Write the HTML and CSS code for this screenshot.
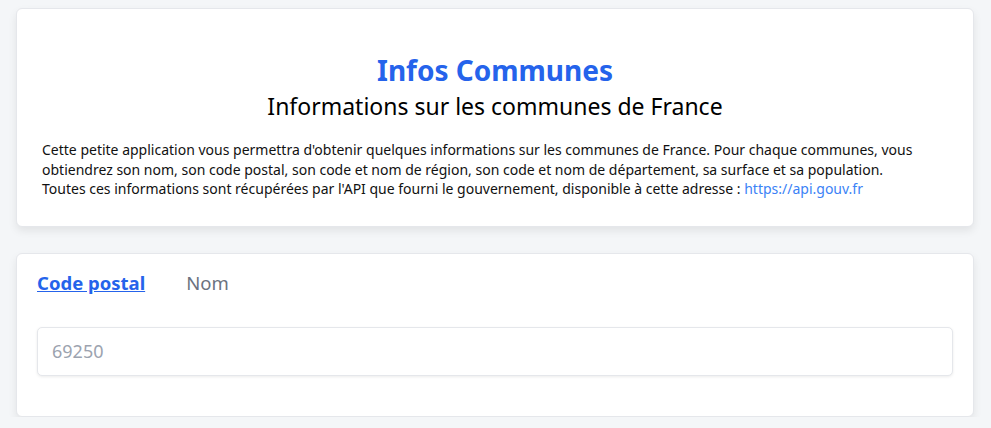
FILE: index.html
```html
<!DOCTYPE html>
<html lang="fr">
<head>
<meta charset="utf-8">
<title>Infos Communes</title>
<link rel="stylesheet" href="styles.css">
</head>
<body>
<main class="page">
  <section class="card intro">
    <h1 class="title">Infos Communes</h1>
    <h2 class="subtitle">Informations sur les communes de France</h2>
    <p class="desc">Cette petite application vous permettra d'obtenir quelques informations sur les communes de France. Pour chaque communes, vous obtiendrez son nom, son code postal, son code et nom de région, son code et nom de département, sa surface et sa population.<br>Toutes ces informations sont récupérées par l'API que fourni le gouvernement, disponible à cette adresse : <a class="link" href="#">https://api.gouv.fr</a></p>
  </section>
  <section class="card search">
    <nav class="tabs">
      <a class="tab active" href="#">Code postal</a>
      <a class="tab" href="#">Nom</a>
    </nav>
    <input class="field" type="text" placeholder="69250">
  </section>
</main>
</body>
</html>
```
FILE: styles.css
```css
html, body {
  margin: 0;
  padding: 0;
}
body {
  background: #f4f6f8;
  font-family: "Noto Sans", "Open Sans", sans-serif;
  color: #111;
}
.page {
  padding: 8px 17px 0 16px;
  display: flex;
  flex-direction: column;
  gap: 26px;
}
.card {
  background: #fff;
  border: 1px solid #e5e7eb;
  border-radius: 6px;
  box-shadow: 0 4px 8px rgba(0,0,0,0.08);
}
.intro {
  padding: 43px 25px 27px;
  text-align: center;
}
.title {
  margin: 0;
  font-size: 28px;
  font-weight: 700;
  line-height: 36px;
  color: #2563eb;
}
.subtitle {
  margin: 2px 0 0;
  font-size: 23px;
  font-weight: 400;
  line-height: 32px;
  color: #000;
}
.desc {
  margin: 18px 0 0;
  text-align: left;
  font-size: 14px;
  line-height: 19.5px;
  color: #111;
}
.link {
  color: #3b82f6;
  text-decoration: none;
}
.search {
  padding: 16px 20px 40px;
}
.tabs {
  display: flex;
  gap: 41px;
  margin-bottom: 31px;
}
.tab {
  font-size: 18.5px;
  line-height: 26px;
  color: #6b7280;
  text-decoration: none;
}
.tab.active {
  color: #2563eb;
  font-weight: 700;
  text-decoration: underline;
}
.field {
  display: block;
  box-sizing: border-box;
  width: 100%;
  height: 49px;
  padding: 0 14px;
  border: 1px solid #e5e7eb;
  border-radius: 5px;
  box-shadow: 0 1px 3px rgba(0,0,0,0.08);
  font-family: inherit;
  font-size: 18px;
  color: #111;
  background: #fff;
}
.field::placeholder {
  color: #9ca3af;
}
```
